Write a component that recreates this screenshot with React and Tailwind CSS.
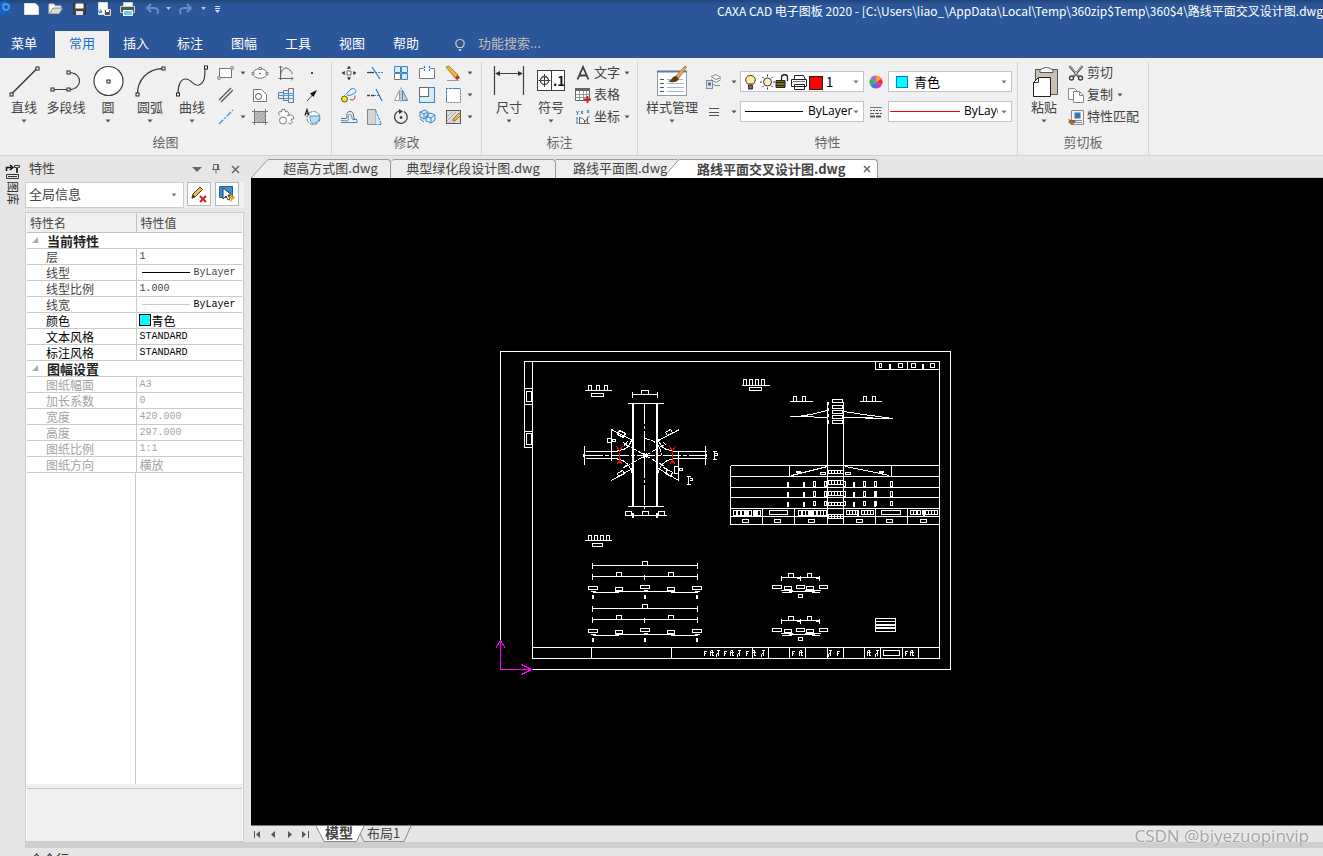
import React, { useState } from 'react';

const UI_FONT = "font-['Noto_Sans_CJK_SC','Open_Sans',sans-serif]";
const LATIN_FONT = "font-['Open_Sans','Noto_Sans_CJK_SC',sans-serif]";
const MONO_FONT = "font-['Liberation_Mono','Noto_Sans_CJK_SC',monospace]";

function Svg({ w = 20, h = 20, children, className = '' }) {
  return (
    <svg width={w} height={h} viewBox={`0 0 ${w} ${h}`} fill="none" stroke="#3b3f46" aria-hidden="true" className={`shrink-0 ${className}`}>
      {children}
    </svg>
  );
}

function Caret({ color = '#555' }) {
  return (
    <Svg w={6} h={4}>
      <path d="M.5 .5h5L3 3.5z" fill={color} stroke="none" />
    </Svg>
  );
}

/* ---------- large ribbon icons ---------- */

const Node = ({ x, y }) => <rect x={x - 1.5} y={y - 1.5} width="3" height="3" fill="#fff" stroke="#222" />;

const bigIcons = {
  line: (
    <Svg w={34} h={34}>
      <path d="M4.500 30L30.500 4" strokeWidth="1.600" />
      <Node x={4.5} y={30.5} />
      <Node x={30.5} y={4.5} />
    </Svg>
  ),
  polyline: (
    <Svg w={34} h={34}>
      <path d="M4 25.500h16c14 0 14-17 0-17" strokeWidth="1.200" />
      <Node x={3.5} y={25.5} />
      <Node x={19.5} y={25.5} />
      <Node x={19.5} y={8.5} />
    </Svg>
  ),
  circle: (
    <Svg w={34} h={34}>
      <circle cx="17.500" cy="17" r="14.500" fill="#fff" strokeWidth="1.200" />
      <Node x={17.5} y={17.5} />
    </Svg>
  ),
  arc: (
    <Svg w={34} h={34}>
      <path d="M4.500 30C4.500 16 14 5 30 4.500" strokeWidth="1.300" />
      <Node x={4.5} y={30.5} />
      <Node x={30.5} y={4.5} />
    </Svg>
  ),
  curve: (
    <Svg w={34} h={34}>
      <path d="M3 30C3 22 5 15 11 15s7 8 13 6c6-2 6-10 6-17" strokeWidth="1.200" />
      <Node x={3} y={30.5} />
      <Node x={31} y={3.5} />
    </Svg>
  ),
  dimension: (
    <Svg w={34} h={34}>
      <path d="M2.500 2v29M31.500 2v29M4 9.500h26" strokeWidth="1.200" />
      <path d="M3 9.500l5-2.500v5zM31 9.500l-5-2.500v5z" fill="#333" stroke="none" />
    </Svg>
  ),
  symbol: (
    <Svg w={34} h={34}>
      <rect x="3.500" y="6.500" width="27" height="20" fill="#fff" />
      <path d="M17.500 6v21M4.500 16.500h12M10.500 10v13" />
      <circle cx="10.500" cy="16.500" r="4" strokeWidth="1.300" />
      <text x="19" y="22" fontSize="13" fontWeight="700" fill="#111" stroke="none">.1</text>
    </Svg>
  ),
  style: (
    <Svg w={34} h={36}>
      <rect x="2.500" y="8.500" width="29" height="24" fill="#fff" stroke="#8a99ad" />
      <path d="M2 8.500h30" stroke="#5d7da5" strokeWidth="2" />
      <path d="M5 16.500h5M5 20.500h5M5 24.500h5M5 28.500h5" stroke="#556" strokeDasharray="4 1" />
      <path d="M12 16.500h16M12 20.500h17M12 24.500h17M12 28.500h17" stroke="#9db8da" />
      <path d="M21 13l9-10 1.500 1-7.500 11z" fill="#f2ab55" stroke="#a8651f" strokeWidth=".8" />
      <path d="M13 18c4 0 4-5 8-5l3 3c-2 4-8 4-11 2z" fill="#5f3a12" stroke="none" />
    </Svg>
  ),
  paste: (
    <Svg w={34} h={36}>
      <path d="M8.500 6.500h22v25h-22z" fill="#c8c0b0" stroke="#555" />
      <path d="M13 6.500c2 0 3-2 6.500-2s4 2 6.500 2v3H13z" fill="#fff" stroke="#555" />
      <path d="M11.500 14.500h12v19h-17v-14z" fill="#fff" stroke="#222" />
      <path d="M6.500 19.500h5v-5" />
    </Svg>
  ),
};

/* ---------- small ribbon icons ---------- */

const S = ({ children }) => <Svg w={18} h={18}>{children}</Svg>;

const icons = {
  rect: (
    <S>
      <rect x="2.500" y="4.500" width="12" height="9" fill="#fff" stroke="#777" />
      <path d="M.8 12.800h2.400v2.400H.8zM13.800 2.800h2.400v2.400h-2.400z" fill="#fff" stroke="#666" strokeWidth=".8" />
    </S>
  ),
  ellipse: (
    <S>
      <ellipse cx="9" cy="9.500" rx="7" ry="4.800" fill="#fff" stroke="#777" />
      <path d="M8 3.500h2.500v2H8zM1 8.500h2v2H1zM15 8.500h2v2h-2zM8.500 9h1v1h-1z" fill="#fff" stroke="#666" strokeWidth=".8" />
    </S>
  ),
  formula: (
    <S>
      <path d="M3.500 2v14M1.500 14.500H16M3.500 14c0-12 8-13 12-4" stroke="#666" />
      <path d="M1.500 4l2-2 2 2M14 12.500l2 2-2 2" stroke="#666" strokeWidth=".8" />
    </S>
  ),
  point: <S><path d="M8 8h2v2H8z" fill="#444" stroke="none" /></S>,
  parallel: <S><path d="M2 14L14 2M4 16L16 4" strokeWidth="1.300" stroke="#555" /></S>,
  hole: (
    <S>
      <path d="M2.500 3.500h8l5 5v7h-13z" fill="#fff" stroke="#777" />
      <circle cx="7.500" cy="10.500" r="3" stroke="#555" />
    </S>
  ),
  shaft: (
    <S>
      <path d="M1.500 6.500h5v6h-5zM6.500 4.500h5v10h-5zM11.500 2.500h5v14h-5z" fill="#dfeefc" stroke="#777" />
      <path d="M1 9.500h16M7 7.500h10M7 12.500h10" stroke="#4f96d8" />
    </S>
  ),
  arrow: (
    <S>
      <path d="M4 15L9.500 9" />
      <path d="M14 4l-7 3.500 3.500 3.500z" fill="#111" stroke="none" />
    </S>
  ),
  centerline: <S><path d="M2 16L16 2" stroke="#1e9be0" strokeWidth="1.200" strokeDasharray="6 1.500 2 1.500" /></S>,
  hatch: (
    <S>
      <rect x="3.500" y="3.500" width="11" height="11" fill="#bbb" stroke="none" />
      <path d="M3.500 1v16M14.500 1v16M1 3.500h16M1 14.500h16" stroke="#777" />
      <path d="M4 8l5-4M4 12l10-8M7 14l7-6M11 14l3-3" stroke="#999" strokeWidth=".8" />
    </S>
  ),
  gear: (
    <S>
      <path d="M1.500 5.500l1-2 2 .5.500-2.500h3l.5 2.500 2-.5 1.500 2-1.500 2 4-.5 2 1.500v2.500h-2l-.5 1.500 1.500 1.500-2 2-2-1" fill="#fff" stroke="#777" />
      <path d="M1.500 5.500l1.500 2" stroke="#777" />
      <circle cx="6" cy="12.500" r="3.500" fill="#fff" stroke="#777" />
    </S>
  ),
  block: (
    <S>
      <circle cx="10.500" cy="10" r="6.500" fill="#fff" stroke="#777" strokeDasharray="4 1" />
      <path d="M7 8h9.500c0 6-4 8-7.500 7-2-2-2-4-2-7z" fill="#b4e1f7" stroke="#4b9bd0" />
      <path d="M2 7.500l2-6 2 6M3 5.500h2.500" stroke="#222" strokeWidth="1.200" />
    </S>
  ),
  move: (
    <S>
      <path d="M7 7h4v4H7z" fill="#fff" stroke="#666" />
      <path d="M9 2l1.500 2.500h-3zM9 16l1.500-2.500h-3zM2 9l2.500-1.500v3zM16 9l-2.500-1.500v3z" fill="#333" stroke="#333" strokeWidth=".6" />
    </S>
  ),
  trim: (
    <S>
      <path d="M1 8.500h7" strokeWidth="1.300" />
      <path d="M9 8.500h8" stroke="#3388d0" strokeDasharray="2 1" />
      <path d="M6 3l8 12" stroke="#2a7fd0" strokeWidth="1.300" />
    </S>
  ),
  array: (
    <S>
      <path d="M2.500 2.500h6v6h-6zM9.500 2.500h6v6h-6zM9.500 9.500h6v6h-6z" fill="#d4ebfa" stroke="#3a86c4" />
      <path d="M2.500 9.500h6v6h-6z" fill="#fff" stroke="#777" />
    </S>
  ),
  breakAt: (
    <S>
      <path d="M5.500 4.500h-4v10h15v-10h-4" fill="#fff" stroke="#777" />
      <path d="M6.500 2v5M11.500 2v5" stroke="#2a7fd0" strokeWidth="1.300" strokeDasharray="2 1" />
    </S>
  ),
  erase: (
    <S>
      <path d="M2 3l3-1 9 9-3 3z" fill="#f4b13c" stroke="#a56b18" strokeWidth=".8" />
      <path d="M11 14l3-3 2 3-3 2z" fill="#b0372c" stroke="none" />
      <path d="M3 16.500h12" stroke="#999" />
    </S>
  ),
  copyRotate: (
    <S>
      <path d="M7 7l4-4c4-2 6 2 4 4l-4 2c-3 1-5 0-4-2z" fill="#e2f2fc" stroke="#3a86c4" />
      <circle cx="4.500" cy="13" r="3" fill="#ffe600" stroke="#555" />
      <path d="M10 13.500c4 1 5 0 5-4" stroke="#b03333" />
    </S>
  ),
  extend: (
    <S>
      <path d="M1 9.500h7" strokeWidth="1.300" strokeDasharray="3 1" />
      <path d="M8 9.500h5" stroke="#3388d0" strokeDasharray="2 1" />
      <path d="M10 3l6 12" stroke="#2a7fd0" strokeWidth="1.300" />
    </S>
  ),
  mirror: (
    <S>
      <path d="M7.500 4v10.500h-5z" fill="#f8f8f8" stroke="#999" />
      <path d="M10.500 4v10.500h5z" fill="#b5d8f2" stroke="#4b87b8" />
      <path d="M9 1.500v15" stroke="#777" strokeDasharray="2 1" />
    </S>
  ),
  scale: (
    <S>
      <rect x="1.500" y="1.500" width="15" height="15" fill="#d4ebfa" stroke="#3a86c4" />
      <rect x="1.500" y="1.500" width="9" height="9" fill="#fff" stroke="#666" />
    </S>
  ),
  marquee: (
    <S>
      <rect x="2.500" y="2.500" width="14" height="14" fill="#fff" stroke="#777" strokeDasharray="2 1" />
      <path d="M2.500 16V2.500H16" stroke="#3a86c4" strokeDasharray="3 1" />
    </S>
  ),
  offset: (
    <S>
      <path d="M1 10.500h5c2 0-1-7 4-7s3 7 4 7h1" stroke="#666" />
      <path d="M1 14.500h16v-3h-4c-2 0 0-5-3-5s-1 5-2 6-4 0-7 0" stroke="#4b87b8" />
    </S>
  ),
  stretch: (
    <S>
      <path d="M1.500 1.500h8v15h-8z" fill="#d4d4d4" stroke="#888" />
      <path d="M9.500 2l6 14.500h-6" fill="#d4ebfa" stroke="#3a86c4" strokeDasharray="3 1" />
    </S>
  ),
  rotate: (
    <S>
      <path d="M7 3A6.300 6.300 0 1 0 12 3.500" strokeWidth="1.300" />
      <path d="M7 1v5l4-2.500z" fill="#333" stroke="none" />
      <circle cx="9" cy="9.500" r="1" fill="#333" />
    </S>
  ),
  explode: (
    <S>
      <path d="M2 4l5-2 3 2v5l-4 2-4-2zM8 8l4-3 5 2v5l-4 3-5-2z" fill="#dceefb" stroke="#3a86c4" />
      <path d="M2 4l4 2 4-2M6 6v5M8 8l5 2 4-3M13 10v5M2 11l4 3" stroke="#3a86c4" />
    </S>
  ),
  editHatch: (
    <S>
      <rect x="2.500" y="2.500" width="14" height="13" fill="#ddd" stroke="#555" />
      <path d="M3 9l5-5M3 13l9-9M5 15L15 5M9 15l6-6" stroke="#aaa" />
      <path d="M9 13l1-3 5-5 2 2-5 5z" fill="#f0b04c" stroke="#8a5a1c" strokeWidth=".7" />
    </S>
  ),
  text: (
    <S>
      <path d="M3.500 15.500L9 3l5.500 12.500M5.500 11.500h7" strokeWidth="1.800" />
    </S>
  ),
  table: (
    <S>
      <path d="M1.500 2.500h14v12h-14z" fill="#fff" stroke="#666" />
      <path d="M1 3.500h15" stroke="#666" strokeWidth="3" />
      <path d="M1.500 8.500h14M1.500 11.500h14M5.500 5v9M9.500 5v9M12.500 5v9" stroke="#999" />
      <path d="M10 13.500h7M13.500 10v7" stroke="#c22" strokeWidth="1.800" />
    </S>
  ),
  coord: (
    <S>
      <path d="M5.500 16V9.500l3 1 3 3 3-5h1M5 15.500h11M10.500 12v4M13.500 9v7" stroke="#666" />
      <path d="M2 3l1.500 2L5 3M3.500 5v2M7 3l2 3M9 3L7 6M13 2l2 3M15 2l-2 3M2 10h2M3 10v5M2 15h2" stroke="#3a86c4" />
    </S>
  ),
  layers: (
    <S>
      <path d="M6 3.500l5-2 5 3-5 2zM6 6.500l5 3 5-3M6 9.500l4 3h5" fill="#f5f5f5" stroke="#889" />
      <rect x="1.500" y="7.500" width="6" height="8" fill="#dfe7ee" stroke="#889" />
      <path d="M3 9.500h3v3H3z" fill="#3f78ad" stroke="none" />
    </S>
  ),
  lines: <S><path d="M4 5.500h10M4 9.500h10M4 12.500h10" stroke="#555" strokeWidth="1.200" /></S>,
  lineStyles: (
    <S>
      <path d="M3 4.500h12" stroke="#777" />
      <path d="M3 7.500h12" stroke="#555" strokeDasharray="2 1" />
      <path d="M3 10.500h12" stroke="#555" strokeDasharray="4 1" />
      <path d="M3 13.500h12" stroke="#555" strokeWidth="2" strokeDasharray="5 1" />
    </S>
  ),
  wheel: (
    <S>
      <g stroke="none">
        <path d="M9 9V2.500a6.500 6.500 0 0 1 5.600 3.200z" fill="#ff9d2e" />
        <path d="M9 9l5.600-3.300a6.500 6.500 0 0 1 0 6.600z" fill="#e6343a" />
        <path d="M9 9l5.600 3.300A6.500 6.500 0 0 1 9 15.500z" fill="#c63cc0" />
        <path d="M9 9v6.500a6.500 6.500 0 0 1-5.600-3.200z" fill="#3678e8" />
        <path d="M9 9l-5.600 3.300a6.500 6.500 0 0 1 0-6.600z" fill="#38b54a" />
        <path d="M9 9L3.400 5.700A6.500 6.500 0 0 1 9 2.500z" fill="#a568d8" />
      </g>
    </S>
  ),
  cut: (
    <S>
      <path d="M2.500 2l9 10.500M15.500 2l-9 10.500" stroke="#555" strokeWidth="2.200" />
      <path d="M3 2l8.500 10M15 2l-8.500 10" stroke="#ddd" strokeWidth=".8" />
      <circle cx="4.500" cy="14" r="2" strokeWidth="1.400" />
      <circle cx="13.500" cy="14" r="2" strokeWidth="1.400" />
    </S>
  ),
  copy: (
    <S>
      <path d="M1.500 2.500h6l3 3v8h-9z" fill="#fff" stroke="#888" />
      <path d="M6.500 5.500h6l4 4v7h-10z" fill="#fff" stroke="#888" />
      <path d="M12.500 5.500v4h4" stroke="#888" />
    </S>
  ),
  match: (
    <S>
      <path d="M4.500 2.500h12v14h-12z" fill="#f4f4f4" stroke="#889" />
      <path d="M7.500 4.500h6v6h-6z" fill="#3f78ad" stroke="none" />
      <path d="M6 12.500h9M6 14.500h9" stroke="#889" />
      <path d="M1.500 11.500l3 2 3-1M2 13c0 4 5 4 6 0z" fill="#b5793c" stroke="#8a4f1c" />
    </S>
  ),
};

/* ---------- ribbon parts ---------- */

function BigButton({ icon, label, caret, wide }) {
  return (
    <button type="button" className={`flex shrink-0 flex-col items-center ${wide ? 'w-[60px]' : 'w-[42px]'}`}>
      <span className="flex h-[38px] items-center">{bigIcons[icon]}</span>
      <span className="h-[14px] whitespace-nowrap leading-[13px]">{label}</span>
      <span className="flex h-[14px] items-center">{caret && <Caret />}</span>
    </button>
  );
}

function SmallButton({ icon, name, caret, arrowSlot }) {
  return (
    <button type="button" aria-label={name} className="flex h-[22px] items-center">
      <span className="flex w-[26px] justify-center">{icons[icon]}</span>
      {arrowSlot && <span className="flex w-2 justify-center">{caret && <Caret />}</span>}
    </button>
  );
}

function LabelButton({ icon, label, caret }) {
  return (
    <button type="button" className="flex h-[22px] items-center">
      <span className="flex w-[22px] justify-center">{icons[icon]}</span>
      <span className="pb-[3px]">{label}</span>
      {caret && <span className="ml-1"><Caret /></span>}
    </button>
  );
}

function Group({ title, children, className = '', pad = '' }) {
  return (
    <section className={`flex shrink-0 flex-col border-r border-[#d4d4d4] ${className}`}>
      <div className={`flex h-[66px] ${pad}`}>{children}</div>
      <h2 className="mt-1 text-center leading-5 text-[#666]">{title}</h2>
    </section>
  );
}

function Combo({ name, value, className = '', children }) {
  return (
    <div className="flex h-[21px] w-[124px] shrink-0 items-center overflow-hidden border border-[#c3c3c3] bg-white pr-1 text-black">
      {children}
      <select aria-label={name} className={`h-full min-w-0 flex-1 appearance-none bg-transparent pb-px outline-none ${className}`}>
        <option>{value}</option>
      </select>
      <Caret color="#777" />
    </div>
  );
}

const drawTools = [
  ['ellipse', '椭圆'], ['formula', '公式曲线'], ['point', '点'],
  ['hole', '孔'], ['shaft', '轴'], ['arrow', '箭头'],
  ['hatch', '剖面线'], ['gear', '齿轮'], ['block', '块'],
];

const modifyTools = [
  ['move', '平移'], ['trim', '裁剪'], ['array', '阵列'], ['breakAt', '打断'], ['erase', '删除'],
  ['copyRotate', '平移复制'], ['extend', '延伸'], ['mirror', '镜像'], ['scale', '缩放'], ['marquee', '选择'],
  ['offset', '等距线'], ['stretch', '拉伸'], ['rotate', '旋转'], ['explode', '分解'], ['editHatch', '编辑填充'],
];

function Ribbon() {
  return (
    <div className="flex h-[98px] shrink-0 overflow-hidden border-b border-[#d2d2d2] bg-[#f0f0f0] pt-1 text-[13px] text-[#444]">
      <Group title="绘图" className="w-[332px]" pad="pl-[3px]">
        <BigButton icon="line" label="直线" caret />
        <BigButton icon="polyline" label="多段线" />
        <BigButton icon="circle" label="圆" caret />
        <BigButton icon="arc" label="圆弧" caret />
        <BigButton icon="curve" label="曲线" caret />
        <div className="flex flex-col">
          <SmallButton icon="rect" name="矩形" caret arrowSlot />
          <SmallButton icon="parallel" name="平行线" arrowSlot />
          <SmallButton icon="centerline" name="中心线" caret arrowSlot />
        </div>
        <div className="grid grid-cols-3">
          {drawTools.map(([icon, name]) => <SmallButton key={icon} icon={icon} name={name} />)}
        </div>
      </Group>

      <Group title="修改" className="w-[150px]" pad="pl-1">
        <div className="grid grid-cols-[26px_26px_26px_26px_40px]">
          {modifyTools.map(([icon, name], i) => (
            <SmallButton key={icon} icon={icon} name={name} caret={i % 5 === 4} arrowSlot={i % 5 === 4} />
          ))}
        </div>
      </Group>

      <Group title="标注" className="w-[156px]" pad="pl-[6px]">
        <BigButton icon="dimension" label="尺寸" caret />
        <BigButton icon="symbol" label="符号" caret />
        <div className="flex flex-col">
          <LabelButton icon="text" label="文字" caret />
          <LabelButton icon="table" label="表格" />
          <LabelButton icon="coord" label="坐标" caret />
        </div>
      </Group>

      <Group title="特性" className="w-[380px]" pad="pl-1">
        <BigButton icon="style" label="样式管理" caret wide />
        <div className="flex flex-col gap-[9px] pt-[9px]">
          <div className="flex items-center">
            <button type="button" aria-label="图层" className="flex w-[38px] items-center justify-end gap-2 pr-[3px]">
              {icons.layers}<Caret />
            </button>
            <Combo name="当前图层" value="1" className="pl-[2px]">
              <Svg w={83} h={19}>
                <path d="M6.500 12C3 8 5 3.500 9.500 3.500S16 8 12.500 12z" fill="#ffe9a0" stroke="#333" />
                <path d="M7.500 13h4v4h-4z" fill="#666" stroke="#333" />
                <circle cx="26.500" cy="10" r="4" fill="#fff3c4" stroke="#333" />
                <path d="M26.500 2.500v2M26.500 15.500v2M19 10h2M32 10h2M21.200 4.700l1.500 1.500M30.300 13.800l1.500 1.500M31.800 4.700l-1.500 1.500M22.700 13.800l-1.500 1.500" stroke="#333" />
                <path d="M35 8.500h9v7h-9z" fill="#9a8f00" stroke="#222" />
                <path d="M35 10.500h9M35 13.500h9M40.500 8V5c0-3 6-3 6 0v4" stroke="#222" strokeWidth="1.300" />
                <path d="M53.500 7.500v-4h9l2 4M50.500 7.500h15v7h-15zM53.500 12.500h10v5h-10z" fill="#fff" stroke="#222" />
                <path d="M52 9.500h12" stroke="#777" />
                <rect x="68.500" y="4.500" width="13" height="13" fill="#f00" stroke="#222" />
              </Svg>
            </Combo>
            <button type="button" aria-label="颜色" className="flex w-6 justify-center">{icons.wheel}</button>
            <Combo name="当前颜色" value="青色" className="pl-[6px]">
              <span className="ml-[7px] size-3 border border-[#0078d7] bg-[#0ff]" />
            </Combo>
          </div>
          <div className="flex items-center">
            <button type="button" aria-label="线宽" className="flex w-[38px] items-center justify-end gap-2 pr-[3px]">
              {icons.lines}<Caret />
            </button>
            <Combo name="线型" value="ByLayer" className={`pl-[5px] text-xs ${LATIN_FONT}`}>
              <span className="ml-1 h-px w-[58px] shrink-0 bg-black" />
            </Combo>
            <button type="button" aria-label="线型管理" className="flex w-6 justify-center">{icons.lineStyles}</button>
            <Combo name="线宽选择" value="ByLayer" className={`mr-[3px] pl-1 text-xs ${LATIN_FONT}`}>
              <span className="ml-px h-px w-[70px] shrink-0 bg-[#f00]" />
            </Combo>
          </div>
        </div>
      </Group>

      <Group title="剪切板" className="w-[131px]" pad="pl-[5px]">
        <BigButton icon="paste" label="粘贴" caret />
        <div className="flex flex-col">
          <LabelButton icon="cut" label="剪切" />
          <LabelButton icon="copy" label="复制" caret />
          <LabelButton icon="match" label="特性匹配" />
        </div>
      </Group>
    </div>
  );
}

/* ---------- title bar and menu ---------- */

function TitleBar() {
  return (
    <div className="flex h-[30px] shrink-0 items-start overflow-hidden bg-[linear-gradient(#234679,#2b579a_5px)]">
      <Svg w={226} h={20}>
        <path d="M0 5l3-2 3-1M0 9l2 4 3 1" stroke="#1565d8" strokeWidth="3" />
        <circle cx="6" cy="7" r="3" stroke="#3aa0f5" strokeWidth="2" />
        <path d="M8 10l3 3" stroke="#1565d8" strokeWidth="2" />
        <path d="M24.500 3.500h11l3 3v8h-14z" fill="#fff" stroke="#ddd" />
        <path d="M49 14V4h5l1 2h6v3" fill="#fff" stroke="#ccc" />
        <path d="M49 14l4-6h10l-4 6z" fill="#d8d8d8" stroke="#555" strokeWidth=".6" />
        <path d="M73.500 3.500h12v11h-12z" fill="#444" stroke="#333" />
        <path d="M75.500 3.500h8v5h-8z" fill="#fff" stroke="none" />
        <path d="M76 11h7v4h-7z" fill="#ddd" stroke="none" />
        <path d="M98.500 2.500h9v12h-9z" fill="#fff" stroke="#ddd" />
        <path d="M98 11l4 1M100 9l2 3-3 1" stroke="#2780d0" />
        <path d="M104.500 9.500h6v6h-6z" fill="#555" stroke="#ddd" />
        <path d="M106 10h3v2h-3z" fill="#fff" stroke="none" />
        <path d="M123.500 2.500h9v4h-9z" fill="#fff" stroke="#ccc" />
        <path d="M120.500 6.500h14v6h-14z" fill="#555" stroke="#ccc" />
        <path d="M123.500 10.500h9v5h-9z" fill="#62d0f5" stroke="#fff" />
        <g stroke="#6d8cbd" strokeWidth="2">
          <path d="M151 4l-4 4 4 4M148 8h6c4 0 5 3 3 6" />
          <path d="M187 4l4 4-4 4M190 8h-6c-4 0-5 3-3 6" />
        </g>
        <path d="M166 7h5l-2.500 3zM201 7h5l-2.500 3z" fill="#b9c8e2" stroke="none" />
        <path d="M215 6.500h5M215 8.500h5" stroke="#dce4f2" />
        <path d="M215 10h5l-2.500 3z" fill="#dce4f2" stroke="none" />
      </Svg>
      <h1 className="ml-auto whitespace-nowrap pt-[2px] text-xs leading-[18px] text-white">
        CAXA CAD 电子图板 2020 - [C:\Users\liao_\AppData\Local\Temp\360zip$Temp\360$4\路线平面交叉设计图.dwg
      </h1>
    </div>
  );
}

const menuTabs = ['常用', '插入', '标注', '图幅', '工具', '视图', '帮助'];

function MenuBar() {
  const [active, setActive] = useState('常用');
  return (
    <nav className="flex h-[28px] shrink-0 items-end bg-[#2b579a] text-[13px] text-white">
      <button type="button" className="mr-[7px] h-[27px] w-12 pb-1">菜单</button>
      {menuTabs.map(tab => (
        <button
          key={tab}
          type="button"
          onClick={() => setActive(tab)}
          className={`h-[27px] w-[54px] pb-1 ${tab === active ? 'bg-[#f0f0f0] text-[#1b6ec2]' : ''}`}
        >
          {tab}
        </button>
      ))}
      <label className="ml-5 flex h-[27px] items-center pb-1">
        <Svg w={14} h={14} className="mt-1">
          <path d="M5 9.500C1 6 3 1.500 7 1.500S13 6 9 9.500zM5.500 11.500h3M6 12.500h2" stroke="#c3c3c3" strokeWidth="1.200" />
        </Svg>
        <input aria-label="功能搜索" placeholder="功能搜索..." className="ml-[11px] w-32 bg-transparent outline-none placeholder:text-[#c0bdb8]" />
      </label>
    </nav>
  );
}

/* ---------- property panel ---------- */

const currentProps = [
  { name: '层', value: '1' },
  { name: '线型', value: 'ByLayer', line: 'bg-black' },
  { name: '线型比例', value: '1.000' },
  { name: '线宽', value: 'ByLayer', line: 'bg-[#ccc]', darkValue: true },
  { name: '颜色', value: '青色', swatch: true, dark: true },
  { name: '文本风格', value: 'STANDARD', dark: true },
  { name: '标注风格', value: 'STANDARD', dark: true },
];

const sheetProps = [
  { name: '图纸幅面', value: 'A3' },
  { name: '加长系数', value: '0' },
  { name: '宽度', value: '420.000' },
  { name: '高度', value: '297.000' },
  { name: '图纸比例', value: '1:1' },
  { name: '图纸方向', value: '横放' },
];

const isAscii = text => /^[\x20-\x7f]+$/.test(text);

function PropRow({ row, disabled }) {
  const color = disabled ? 'text-[#a3a3a3]' : row.dark ? 'text-black' : 'text-[#444]';
  return (
    <tr className={`h-4 border-b border-[#cbcbcb] ${color}`}>
      <td className="border-r border-[#cbcbcb] p-0 pl-[19px]">{row.name}</td>
      <td className={`p-0 pl-[3px] ${row.darkValue ? 'text-black' : ''}`}>
        <div className="flex h-[15px] items-center">
          {row.swatch && <span className="-ml-px mr-px size-3 border border-black bg-[#0ff]" />}
          {row.line && <span className={`ml-[2px] mr-1 h-px w-12 ${row.line}`} />}
          <span className={isAscii(row.value) ? `text-[10px] ${MONO_FONT}` : ''}>{row.value}</span>
        </div>
      </td>
    </tr>
  );
}

function GroupRow({ title }) {
  return (
    <tr className="h-4 border-b border-[#cbcbcb] text-[#222]">
      <th colSpan={2} className="p-0 text-left">
        <div className="flex h-[15px] items-center pl-[5px]">
          <Svg w={6} h={6}><path d="M6 0v6H0z" fill="#aaa" stroke="none" /></Svg>
          <span className="ml-[9px] text-[13px] leading-[15px]">{title}</span>
        </div>
      </th>
    </tr>
  );
}

function PropertyPanel() {
  return (
    <aside className="flex w-[219px] shrink-0 flex-col">
      <header className="flex h-[26px] shrink-0 items-center pl-1 text-[13px] text-[#444]">
        <h2 className="flex-1 pb-[3px]">特性</h2>
        <button type="button" aria-label="选项"><Svg w={18} h={12}><path d="M4 4h10l-5 5z" fill="#666" stroke="none" /></Svg></button>
        <button type="button" aria-label="固定"><Svg w={20} h={12}><path d="M7.500 1.500h5v5h-5zM6 6.500h8M10 6.500v4M11.500 2v4" stroke="#666" /></Svg></button>
        <button type="button" aria-label="关闭"><Svg w={18} h={12}><path d="M6 3l7 7M13 3l-7 7" stroke="#666" strokeWidth="1.500" /></Svg></button>
      </header>

      <div className="flex h-[26px] shrink-0 gap-[3px] bg-[#f0f0f0]">
        <div className="flex w-[159px] items-center border border-[#ccc] bg-white pl-[3px] pr-1">
          <select aria-label="对象" className="min-w-0 flex-1 appearance-none bg-transparent pb-[2px] pr-1 text-[13px] leading-5 text-[#444] outline-none">
            <option>全局信息</option>
          </select>
          <span className="mr-[2px]"><Caret color="#777" /></span>
        </div>
        <button type="button" aria-label="清除选择" className="flex h-6 w-6 items-center justify-center border border-[#b8b8b8] bg-white">
          <Svg w={18} h={18}>
            <path d="M2 13l1-4 7-7 2.500 2.500-7 7z" fill="#f5c13c" stroke="#333" />
            <path d="M2 13l1-3 2 2z" fill="#333" />
            <path d="M10 11l6 6M16 11l-6 6" stroke="#c22" strokeWidth="2" />
          </Svg>
        </button>
        <button type="button" aria-label="快速选择" className="ml-px flex h-6 w-6 items-center justify-center border border-[#b8b8b8] bg-white">
          <Svg w={18} h={18}>
            <path d="M1.500 1.500h13v11h-13z" fill="#3d8fd6" stroke="#24609a" />
            <path d="M5 3v11l3-3 2 4 2-1-2-4h4z" fill="#fff" stroke="#333" />
            <path d="M14 9l-3 4h3l-2 4 5-5h-3z" fill="#ffb52e" stroke="#d48806" strokeWidth=".6" />
          </Svg>
        </button>
      </div>

      <div className="mt-1 flex min-h-0 flex-1 flex-col border border-[#cbcbcb] bg-white px-px text-xs text-[#444]">
        <table className="w-full shrink-0 table-fixed border-collapse leading-[15px]">
          <colgroup>
            <col className="w-[109px]" />
            <col />
          </colgroup>
          <thead>
            <tr className="h-[19px] border-b border-[#c0c0c0] bg-[#f0f0f0] text-left">
              <th className="border-r border-[#c0c0c0] p-0 pl-[3px] font-normal">特性名</th>
              <th className="p-0 pl-1 font-normal">特性值</th>
            </tr>
          </thead>
          <tbody>
            <GroupRow title="当前特性" />
            {currentProps.map(row => <PropRow key={row.name} row={row} />)}
            <GroupRow title="图幅设置" />
            {sheetProps.map(row => <PropRow key={row.name} row={row} disabled />)}
          </tbody>
        </table>
        <div className="w-[109px] flex-1 border-r border-[#cbcbcb]" />
        <div className="-mx-px h-1 shrink-0 bg-[#efefef]" />
        <div className="h-[53px] shrink-0 border-t border-[#c4c4c4] bg-[#efefef]" />
      </div>
    </aside>
  );
}

function SideStrip() {
  return (
    <div className="flex w-[25px] shrink-0 justify-center pt-[7px]">
      <button type="button" className="flex flex-col items-center gap-px self-start text-[#333]">
        <Svg w={16} h={17}>
          <path d="M1.500 8V4.500h5M5 2l3 2.500L5 7" stroke="#111" strokeWidth="1.500" />
          <path d="M9.500 2.500h5v2h-2v5h-1v-5h-2zM1.500 11.500h12v4h-12zM3 13.500h9" stroke="#333" />
        </Svg>
        <span className="text-xs leading-[14px] [text-orientation:sideways] [writing-mode:vertical-rl]">图库</span>
      </button>
    </div>
  );
}

/* ---------- document tabs ---------- */

function DocTabs() {
  return (
    <div className="flex h-[22px] shrink-0 items-end overflow-hidden bg-[#e6e6e6] text-[13px] text-[#444]">
      <Svg w={20} h={19}>
        <path d="M0 19L16 1.500q1-1 2-1h2V19z" fill="#eee" stroke="none" />
        <path d="M0 19L16 1.500q1-1 2-1h2" stroke="#999" />
      </Svg>
      <button type="button" className="h-[19px] w-[120px] shrink-0 whitespace-nowrap rounded-tr-sm border-r border-t border-[#999] bg-[#eee] pb-[3px] leading-[15px]">超高方式图.dwg</button>
      <button type="button" className="h-[19px] w-[165px] shrink-0 whitespace-nowrap rounded-t-sm border-r border-t border-[#999] bg-[#eee] pb-[3px] leading-[15px]">典型绿化段设计图.dwg</button>
      <button type="button" className="h-[19px] w-[111px] shrink-0 whitespace-nowrap border-t border-[#999] bg-[#eee] pb-[3px] pl-[17px] text-left leading-[15px]">路线平面图.dwg</button>
      <Svg w={16} h={19}>
        <path d="M0 0h14v19H0z" fill="#eee" stroke="none" />
        <path d="M0 .5h10l2 1.500" stroke="#999" />
        <path d="M-4 19L11 1.500q1-1 2-1h3V19z" fill="#fff" stroke="none" />
        <path d="M-4 19L11 1.500q1-1 2-1h3" stroke="#999" />
      </Svg>
      <div className="flex h-[19px] w-[195px] shrink-0 items-center rounded-tr-sm border-r border-t border-[#999] bg-white pl-[14px]">
        <button type="button" className="whitespace-nowrap pb-[2px] font-bold leading-[15px]">路线平面交叉设计图.dwg</button>
        <button type="button" aria-label="关闭文档" className="ml-auto mr-[6px]">
          <Svg w={8} h={8}><path d="M1 1l6 6M7 1L1 7" stroke="#666" strokeWidth="1.500" /></Svg>
        </button>
      </div>
      <div className="h-px flex-1 bg-[#c4c4c4]" />
    </div>
  );
}

/* ---------- drawing ---------- */

// Builds one path out of many boxes given as [x, y, w, h]
const boxes = list => list.map(([x, y, w, h]) => `M${x} ${y}h${w}v${h}h${-w}z`).join('');
// Same, for a row of equal boxes
const boxRow = (xs, y, w, h) => boxes(xs.map(x => [x, y, w, h]));
// Thick tick marks
const ticks = (xs, y, h) => xs.map(x => `M${x} ${y}v${h}M${x + 1} ${y}v${h}`).join('');

function Intersection() {
  return (
    <g>
      <path d={`M584 390H611M632 394h25M632 391v6M657 391v6${boxRow([588, 596, 604], 385, 3, 5)}${boxes([[591, 393, 12, 3], [641, 390, 7, 4]])}`} />
      <path d="M627 403h36M627 506h36M632 403v103M633 403v103M656 403v103M657 403v103" />
      <path d="M644 403v105" strokeDasharray="20 2 3 2" />
      <path d="M584 445v19M705 445v19M583 453v3M706 453v3M585 451h30l4-1M585 458h30l4 1M706 451h-32l-4-1M706 458h-32l-4 1" />
      <path d="M584 455h122" strokeDasharray="18 2 4 2" />
      <path d="M619 450q10-1 13-13M619 459q10 2 13 15M670 450q-10-1-13-13M670 459q-10 2-13 15" />
      <path d="M611 429l21 11M611 480l21-12M679 429l-21 11M678 480l-20-12M611 429v31M678 450v30" />
      <path d="M624 443l42 24M624 467l42-24" strokeDasharray="6 2" />
      <path d="M644 438q16 2 17 17" strokeDasharray="5 1" />
      <path d="M644 452v6M641 455h7M642 453l5 4M642 457l5-4" strokeWidth="1.500" />
      <path d="M619 430l6 3-2 4-6-3zM617 473l5-3 2 3-6 3zM665 432l5-3 2 3-5 3zM667 469l5 3-2 4-5-3z" />
      <path d={boxes([[607, 438, 4, 4], [612, 439, 3, 2], [674, 466, 4, 7], [679, 468, 3, 2]])} />
      <path d="M623 442l5 5M627 441l-4 5M623 467l4-3M663 442l3 3M663 467l4 2" />
      <path d="M712 451h4M712 459h4M714 451v8M714 453h3v2h-3M686 476h4M686 484h4M688 476v8M689 478h3v2h-3" />
      <path d="M619 449v13M616 446l3 4 3-4M616 464l3-4 3 4M672 449v13M669 446l3 4 3-4M669 464l3-4 3 4" stroke="#f00" />
      <path d={`M624 515h42${boxRow([625, 642, 658], 511, 6, 4)}${ticks([632, 656], 512, 5)}`} />
    </g>
  );
}

const markColumns = [813, 824, 843, 863, 874, 890];

function Profile() {
  const deck = [828, 831, 834, 837, 840];
  return (
    <g>
      <path d={`M741 385h28${boxRow([743, 749, 755, 761], 379, 3, 6)}${boxes([[749, 387, 12, 3]])}`} />
      <path d={`M789 401h23M859 401h22${boxRow([793, 802, 863, 872], 396, 3, 5)}`} />
      <path d={`M827 401v123M843 401v123M828 401v3M828 407v3M828 413v3M828 419v4${boxes([[832, 399, 10, 3], [832, 405, 10, 3], [832, 410, 10, 3], [832, 415, 10, 3], [832, 420, 10, 3]])}`} />
      <path d="M789 416h9l12-2 17-4M789 416h20l9 1h9M843 411l20 3 15 2 14 2h-12l-16-1h-21M864 418h12" />
      <path d="M730 465h209M730 476h209M730 487h209M730 497h209M730 508h209M730 516h209M730 524h209M730 465v59M789 465v11M891 465v11M762 508v16M794 508v16M875 508v16M907 508v16" />
      <path d="M791 475l8-2 28-7M845 466l30 6 14 3" />
      <path d={boxes([[796, 471, 4, 1], [879, 471, 4, 1], [820, 472, 5, 2], [845, 472, 5, 2]])} />
      <path d={`${boxRow(markColumns, 481, 2, 5)}${boxRow(markColumns, 491, 2, 5)}${boxRow(markColumns, 501, 2, 4)}`} />
      <path d={`${ticks([787, 803, 853], 481, 6)}${ticks([787, 803, 853, 874], 491, 6)}${ticks([787, 803, 853, 874], 501, 5)}`} />
      <path d={`${boxRow(deck, 470, 3, 3)}${boxRow(deck, 480, 3, 4)}${boxRow(deck, 491, 3, 4)}${boxRow(deck, 502, 3, 3)}${boxRow(deck, 514, 3, 4)}`} />
      <path d={boxRow([733, 737, 741, 744, 748, 753, 757, 798, 802, 805, 809, 813, 817, 820, 823], 510, 3, 5)} />
      <path d={boxRow([846, 849, 852, 855, 861, 864, 867, 870, 910, 913, 917, 922, 925, 928, 931, 934], 510, 3, 4)} />
      <path d={`${ticks([745, 754, 810, 857, 923], 510, 5)}${boxes([[769, 510, 18, 4], [881, 510, 19, 4]])}`} />
      <path d={boxRow([742, 774, 808, 856, 886, 920], 519, 6, 3)} />
    </g>
  );
}

// Wide cross-section with its two dimension lines
function WideSection({ dy }) {
  return (
    <g transform={`translate(0 ${dy})`}>
      <path d="M592 565h105M592 562v6M697 562v6M592 576h105M592 573v6M697 573v6M644 574v5" />
      <path d={`${boxRow([588, 692], 586, 9, 3)}${boxRow([615, 667], 587, 7, 3)}${boxes([[640, 585, 9, 3], [642, 561, 5, 4], [616, 572, 5, 4], [668, 572, 5, 4]])}`} />
      <path d={`M592 592h26M614 591h60M670 592h27M590 591h5M643 590h4M694 591h5${ticks([592, 644, 696], 594, 4)}`} />
    </g>
  );
}

function NarrowSection({ dy }) {
  return (
    <g transform={`translate(0 ${dy})`}>
      <path d="M781 577h38M781 575v5M800 575v5M819 575v5M796 578h4M815 578h4" />
      <path d={boxes([[788, 573, 5, 4], [807, 573, 4, 4], [772, 585, 9, 3], [784, 586, 7, 3], [796, 585, 8, 3], [806, 586, 7, 3], [819, 585, 8, 3], [798, 594, 4, 3]])} />
      <path d="M780 590h12M781 592h10M788 591h26M804 590h16M811 592h8" />
    </g>
  );
}

const titleGlyphs = [704, 711, 717, 724, 731, 738, 746, 753, 762, 792, 800, 829, 837, 868, 876, 905, 911];

// Tiny characters of the title block, too small to be legible
const glyphStrokes = [
  'M0 651h3M1 650v5M2 653l-2 2',
  'M0 650h2v5M0 650v5M0 652h3M1 655h2',
  'M0 650h3l-2 3 2 2M0 653v3M2 650v5',
];

function TitleBlock() {
  return (
    <g>
      <path d="M532 647h407M591 647v11M671 647v11M752 647v11M768 647v11M789 647v11M805 647v11M827 647v11M843 647v11M864 647v11M880 647v11M902 647v11M918 647v11" />
      {titleGlyphs.map((x, i) => (
        <path key={x} d={glyphStrokes[i % 3]} transform={`translate(${x - 1} 0)`} />
      ))}
      <path d={boxes([[883, 650, 16, 5]])} />
    </g>
  );
}

function DrawingCanvas() {
  return (
    <div className="relative min-h-0 flex-1 bg-black">
      <svg className="absolute inset-0 h-full w-full" fill="none" stroke="#fff" shapeRendering="crispEdges" role="img" aria-label="路线平面交叉设计图">
        {/* half pixel shift keeps the hairlines sharp */}
        <g transform="translate(-250.500 -177.500)">
          <path d="M500 351h450v318h-450zM532 361h407v297h-407z" />
          <path d={`M532 361h-8v86h8M524 388h8M524 404h8M524 431h8${boxes([[526, 391, 5, 10], [526, 433, 5, 11]])}`} />
          <path d={`M875 361v8h64M907 361v8${boxes([[879, 363, 2, 4], [898, 363, 4, 4], [911, 363, 4, 4], [930, 363, 4, 4]])}${ticks([889, 922], 363, 5)}`} />
          <Intersection />
          <Profile />
          <path d={`M584 540h27${boxRow([588, 594, 600, 606], 535, 3, 5)}${boxes([[592, 543, 10, 3]])}`} />
          <WideSection dy={0} />
          <WideSection dy={43} />
          <NarrowSection dy={0} />
          <NarrowSection dy={43} />
          <path d="M875 618h20v13h-20zM875 621h20M875 624h20M875 625h20M875 627h20M875 628h20" />
          <TitleBlock />
          <path d="M500 669V640M495 648l5-8 5 8M500 669h31M521 664l10 5-10 5" stroke="#f0f" />
        </g>
      </svg>
    </div>
  );
}

function LayoutTabs() {
  return (
    <div className="flex h-[17px] shrink-0 items-start border-t border-[#777] bg-[#e6e6e6] text-[#444]">
      <button type="button" aria-label="第一页"><Svg w={14} h={16}><path d="M3.500 5v7" stroke="#555" /><path d="M9 5v7L5 8.500z" fill="#555" stroke="none" /></Svg></button>
      <button type="button" aria-label="上一页"><Svg w={17} h={16}><path d="M10 5v7L6 8.500z" fill="#555" stroke="none" /></Svg></button>
      <button type="button" aria-label="下一页"><Svg w={16} h={16}><path d="M6 5v7l4-3.500z" fill="#555" stroke="none" /></Svg></button>
      <button type="button" aria-label="最后一页"><Svg w={18} h={16}><path d="M4 5v7l4-3.500z" fill="#555" stroke="none" /><path d="M10.500 5v7" stroke="#555" /></Svg></button>
      <Svg w={9} h={16}>
        <path d="M0 0h9v16H8z" fill="#fff" stroke="none" />
        <path d="M0 0l8 15.500h1" stroke="#888" />
      </Svg>
      <button type="button" className="h-4 border-b border-[#888] bg-white pb-[2px] text-sm font-bold leading-[13px]">模型</button>
      <Svg w={14} h={16}>
        <path d="M0 0h11L4 16H0z" fill="#fff" stroke="none" />
        <path d="M0 15.500h3.500L11 0M7 8l4 7.500h3" stroke="#888" />
      </Svg>
      <button type="button" className="h-4 border-b border-[#999] pb-[2px] text-[13px] leading-[13px]">布局1</button>
      <Svg w={12} h={16}><path d="M0 15.500h4L11 0" stroke="#888" /></Svg>
    </div>
  );
}

export default function App() {
  return (
    <div className={`relative flex h-screen flex-col overflow-hidden bg-[#e6e6e6] ${UI_FONT}`}>
      <TitleBar />
      <MenuBar />
      <Ribbon />
      <main className="flex min-h-0 flex-1">
        <SideStrip />
        <div className="flex min-w-0 flex-1 flex-col">
          <div className="flex min-h-0 flex-1">
            <PropertyPanel />
            <div className="w-[7px] shrink-0" />
            <div className="flex min-w-0 flex-1 flex-col">
              <DocTabs />
              <DrawingCanvas />
              <LayoutTabs />
            </div>
          </div>
          <div className="h-[6px] shrink-0 bg-[#cdcdcd]" />
          <div className="h-2 shrink-0 overflow-hidden pl-[5px] pt-1 text-[13px] leading-[14px] text-[#333]">命令行</div>
        </div>
      </main>
      <div className={`pointer-events-none absolute bottom-2 right-[14px] text-[17px] leading-6 text-[#a2a2a2] [text-shadow:0_0_2px_#fff] ${LATIN_FONT}`}>
        CSDN @biyezuopinvip
      </div>
    </div>
  );
}
